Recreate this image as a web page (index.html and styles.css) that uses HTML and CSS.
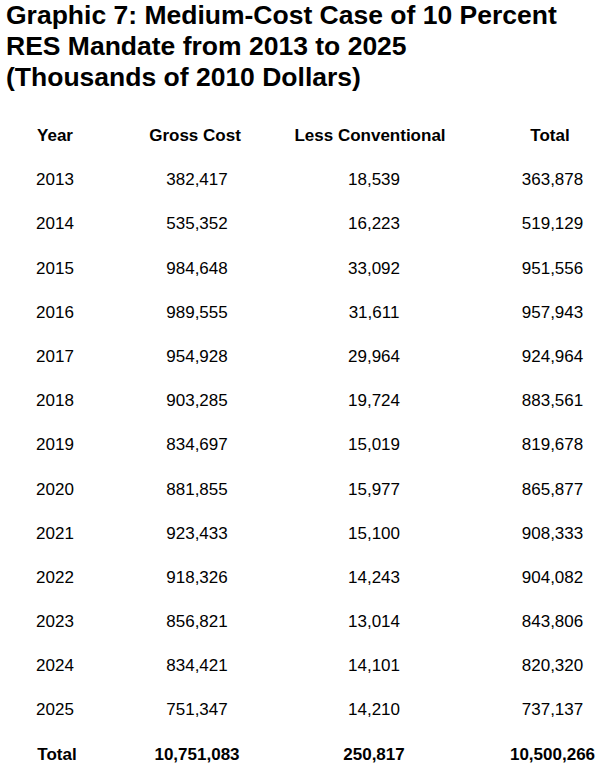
FILE: index.html
```html
<!DOCTYPE html>
<html lang="en">
<head>
<meta charset="utf-8">
<title>Graphic 7</title>
<link rel="stylesheet" href="styles.css">
</head>
<body>
<h1 class="title">Graphic 7: Medium-Cost Case of 10 Percent<br>RES Mandate from 2013 to 2025<br>(Thousands of 2010 Dollars)</h1>
<div class="table">
  <div class="row head"><span>Year</span><span>Gross Cost</span><span>Less Conventional</span><span>Total</span></div>
  <div class="row"><span>2013</span><span>382,417</span><span>18,539</span><span>363,878</span></div>
  <div class="row"><span>2014</span><span>535,352</span><span>16,223</span><span>519,129</span></div>
  <div class="row"><span>2015</span><span>984,648</span><span>33,092</span><span>951,556</span></div>
  <div class="row"><span>2016</span><span>989,555</span><span>31,611</span><span>957,943</span></div>
  <div class="row"><span>2017</span><span>954,928</span><span>29,964</span><span>924,964</span></div>
  <div class="row"><span>2018</span><span>903,285</span><span>19,724</span><span>883,561</span></div>
  <div class="row"><span>2019</span><span>834,697</span><span>15,019</span><span>819,678</span></div>
  <div class="row"><span>2020</span><span>881,855</span><span>15,977</span><span>865,877</span></div>
  <div class="row"><span>2021</span><span>923,433</span><span>15,100</span><span>908,333</span></div>
  <div class="row"><span>2022</span><span>918,326</span><span>14,243</span><span>904,082</span></div>
  <div class="row"><span>2023</span><span>856,821</span><span>13,014</span><span>843,806</span></div>
  <div class="row"><span>2024</span><span>834,421</span><span>14,101</span><span>820,320</span></div>
  <div class="row"><span>2025</span><span>751,347</span><span>14,210</span><span>737,137</span></div>
  <div class="row total"><span>Total</span><span>10,751,083</span><span>250,817</span><span>10,500,266</span></div>
</div>
</body>
</html>
```
FILE: styles.css
```css
html, body {
  margin: 0;
  padding: 0;
  background: #fff;
}
body {
  width: 600px;
  height: 767px;
  overflow: hidden;
  font-family: "Liberation Sans", Arial, sans-serif;
  color: #000;
}
.title {
  margin: 0;
  padding: 0 0 0 6px;
  font-size: 26.5px;
  line-height: 31px;
  font-weight: bold;
  letter-spacing: 0;
}
.table {
  margin-top: 21px;
  display: flex;
  flex-direction: column;
}
.row {
  display: grid;
  grid-template-columns: 110px 174px 178px 138px;
  height: 44.2px;
  line-height: 44.2px;
  font-size: 17px;
  text-align: center;
}
.row span:nth-child(4) {
  padding-left: 43px;
}
.row span:nth-child(3) {
  padding-left: 2px;
}
.head span:nth-child(2) {
  padding-right: 4px;
}
.head span:nth-child(3) {
  padding-right: 6px;
  padding-left: 0;
}
.head span:nth-child(4) {
  padding-left: 38px;
}
.head, .total {
  font-weight: bold;
}
.total span:first-child {
  padding-left: 4px;
}
```
